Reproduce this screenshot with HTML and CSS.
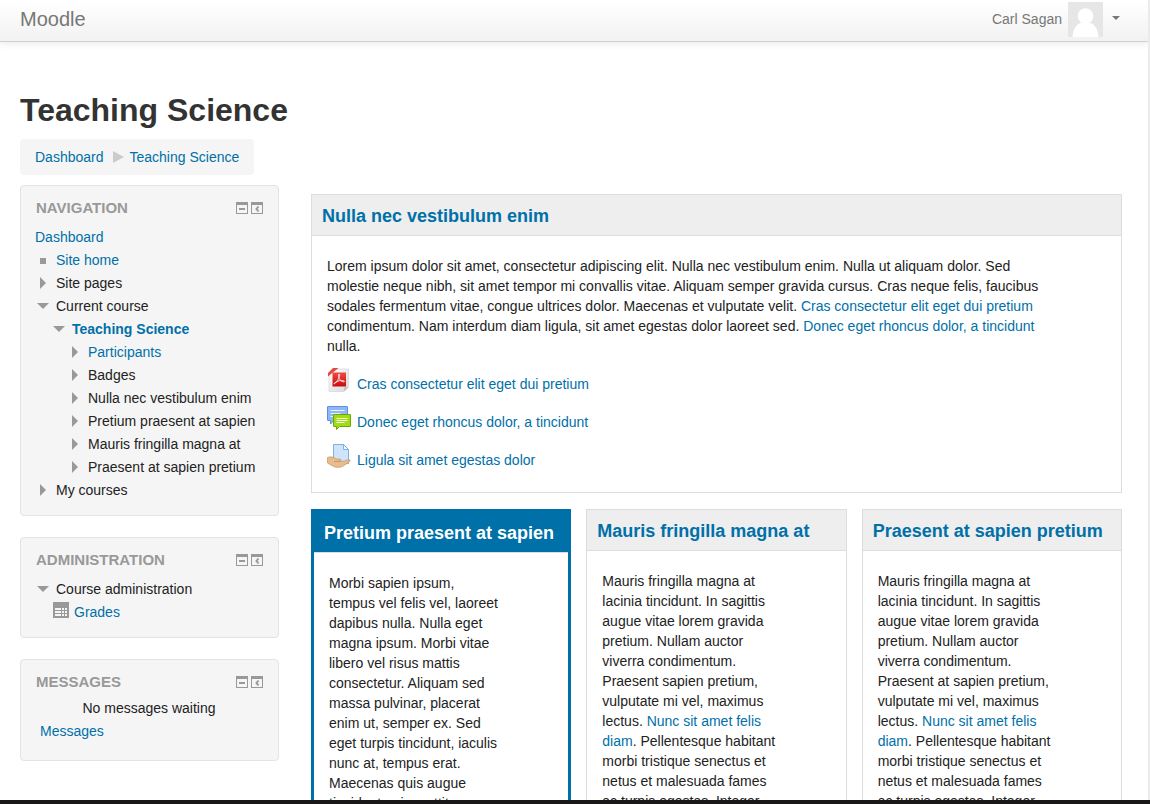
FILE: index.html
```
<!DOCTYPE html>
<html lang="en">
<head>
    <meta charset="UTF-8">
    <meta name="viewport" content="width=device-width, initial-scale=1.0">
    <title>Course: Teaching Science</title>
    <link rel="stylesheet" href="styles.css">
</head>
<body>
    <!-- shared icons -->
    <svg class="sprite" aria-hidden="true">
        <symbol id="hide" viewBox="0 0 12 12">
            <path fill="#999" fill-rule="evenodd" d="M0 0h12v12H0zM1 3v8h10V3z"/>
            <path fill="#999" d="M3 6h6v2H3z"/>
        </symbol>
        <symbol id="dock" viewBox="0 0 12 12">
            <path fill="#999" fill-rule="evenodd" d="M0 0h12v12H0zM1 3v8h10V3z"/>
            <path fill="none" stroke="#999" stroke-width="2" d="M7.500 4.500L5.500 7l2 2.500"/>
        </symbol>
        <symbol id="right" viewBox="0 0 16 16">
            <path fill="#999" d="M5 2l6 6-6 6z"/>
        </symbol>
        <symbol id="down" viewBox="0 0 16 16">
            <path fill="#999" d="M2 5h12L8 11z"/>
        </symbol>
        <symbol id="square" viewBox="0 0 16 16">
            <path fill="#999" d="M5 6h6v6H5z"/>
        </symbol>
    </svg>

    <div class="page">
        <header class="navbar">
            <a class="brand" href="#">Moodle</a>
            <button type="button" class="usermenu">
                <span>Carl Sagan</span>
                <svg class="avatar" viewBox="0 0 35 35">
                    <path fill="#e6e6e6" d="M0 0h35v35H0z"/>
                    <path fill="#fff" d="M4.500 35c.5-8 4-13 9-14.500h8c5 1.500 8.500 6.500 9 14.500z"/>
                    <circle cx="17.500" cy="14" r="7.800" fill="#fff"/>
                </svg>
                <span class="caret"></span>
            </button>
        </header>

        <div class="content">
            <h1>Teaching Science</h1>
            <nav class="breadcrumb" aria-label="Breadcrumb">
                <a href="#">Dashboard</a>
                <svg class="arrow" viewBox="0 0 11 12"><path fill="#ccc" d="M0 0l11 6-11 6z"/></svg>
                <a href="#">Teaching Science</a>
            </nav>

            <div class="columns">
                <aside class="sidebar">
                    <section class="block">
                        <div class="block-header">
                            <h2>Navigation</h2>
                            <button type="button" aria-label="Hide Navigation block"><svg><use href="#hide"/></svg></button>
                            <button type="button" aria-label="Dock Navigation block"><svg><use href="#dock"/></svg></button>
                        </div>
                        <ul class="tree">
                            <li><a href="#">Dashboard</a></li>
                            <li><svg><use href="#square"/></svg><a href="#">Site home</a></li>
                            <li><svg><use href="#right"/></svg>Site pages</li>
                            <li><svg><use href="#down"/></svg>Current course</li>
                            <li class="level2"><svg><use href="#down"/></svg><a href="#" class="current">Teaching Science</a></li>
                            <li class="level3"><svg><use href="#right"/></svg><a href="#">Participants</a></li>
                            <li class="level3"><svg><use href="#right"/></svg>Badges</li>
                            <li class="level3"><svg><use href="#right"/></svg>Nulla nec vestibulum enim</li>
                            <li class="level3"><svg><use href="#right"/></svg>Pretium praesent at sapien</li>
                            <li class="level3"><svg><use href="#right"/></svg>Mauris fringilla magna at</li>
                            <li class="level3"><svg><use href="#right"/></svg>Praesent at sapien pretium</li>
                            <li><svg><use href="#right"/></svg>My courses</li>
                        </ul>
                    </section>

                    <section class="block">
                        <div class="block-header">
                            <h2>Administration</h2>
                            <button type="button" aria-label="Hide Administration block"><svg><use href="#hide"/></svg></button>
                            <button type="button" aria-label="Dock Administration block"><svg><use href="#dock"/></svg></button>
                        </div>
                        <ul class="tree">
                            <li><svg><use href="#down"/></svg>Course administration</li>
                            <li class="grades">
                                <svg viewBox="0 0 16 16">
                                    <path fill="#999" d="M0 0h16v16H0z"/>
                                    <path fill="#f5f5f5" d="M2 6h6v2H2zM9 6h2v2H9zM12 6h2v2h-2zM2 9h6v2H2zM9 9h2v2H9zM12 9h2v2h-2zM2 12h6v2H2zM9 12h2v2H9zM12 12h2v2h-2z"/>
                                </svg>
                                <a href="#">Grades</a>
                            </li>
                        </ul>
                    </section>

                    <section class="block messages">
                        <div class="block-header">
                            <h2>Messages</h2>
                            <button type="button" aria-label="Hide Messages block"><svg><use href="#hide"/></svg></button>
                            <button type="button" aria-label="Dock Messages block"><svg><use href="#dock"/></svg></button>
                        </div>
                        <p class="empty">No messages waiting</p>
                        <a class="footer-link" href="#">Messages</a>
                    </section>
                </aside>

                <main class="topics">
                    <section class="topic wide">
                        <h3><a href="#">Nulla nec vestibulum enim</a></h3>
                        <div class="summary">
                            <p>Lorem ipsum dolor sit amet, consectetur adipiscing elit. Nulla nec vestibulum enim. Nulla ut aliquam dolor. Sed molestie neque nibh, sit amet tempor mi convallis vitae. Aliquam semper gravida cursus. Cras neque felis, faucibus sodales fermentum vitae, congue ultrices dolor. Maecenas et vulputate velit. <a href="#">Cras consectetur elit eget dui pretium</a> condimentum. Nam interdum diam ligula, sit amet egestas dolor laoreet sed. <a href="#">Donec eget rhoncus dolor, a tincidunt</a> nulla.</p>
                            <ul class="activities">
                                <li>
                                    <!-- pdf file -->
                                    <svg viewBox="0 0 24 24">
                                        <defs>
                                            <linearGradient id="paper" x1="0" y1="0" x2="1" y2="1">
                                                <stop offset="0" stop-color="#fff"/>
                                                <stop offset="1" stop-color="#d8d8dc"/>
                                            </linearGradient>
                                            <linearGradient id="red" x1="0" y1="0" x2="0" y2="1">
                                                <stop offset="0" stop-color="#f04a40"/>
                                                <stop offset="1" stop-color="#c80c0c"/>
                                            </linearGradient>
                                        </defs>
                                        <path fill="url(#paper)" stroke="#d0d0d4" stroke-width=".6" d="M8 1h13.500v18L17 23.500H2V7z"/>
                                        <path fill="#bbb" d="M21.500 19L17 23.500l.5-4z"/>
                                        <path fill="#e04a40" d="M6 0h5.500L1 8.500V5z"/>
                                        <path fill="url(#red)" d="M5.500 4.500h13.500v14H5.500z"/>
                                        <path fill="none" stroke="#fff" stroke-width=".8" stroke-linejoin="round" d="M12 6c1.500 0 .5 5-4 9.500-1 .8-1.300.2-.5-.6 3-2.300 7-2.800 9.500-2 1 .5.200 1.200-1 .9-3-.8-5.600-5.300-4-7.800z"/>
                                    </svg>
                                    <a href="#">Cras consectetur elit eget dui pretium</a>
                                </li>
                                <li>
                                    <!-- forum -->
                                    <svg viewBox="0 0 24 24">
                                        <path fill="#8fb8f4" stroke="#5c8fdc" d="M1 .5h19q.5 0 .5.500v13q0 .5-.5.500H7L3.500 18v-3.500H1q-.5 0-.5-.5V1q0-.5.500-.5z"/>
                                        <path fill="none" stroke="#e8f1ff" d="M3.500 4.500h14M3.500 7.500h10M3.500 10.500h3"/>
                                        <path fill="#a2dc16" stroke="#6da50a" d="M7 8.500h16q.5 0 .5.500v11q0 .5-.5.500H12.500L9.500 23.500v-3H7q-.5 0-.5-.5V9q0-.5.500-.5z"/>
                                        <path fill="none" stroke="#f4ffd8" d="M9.500 12.500h11M9.500 14.500h11M9.500 16.500h8"/>
                                    </svg>
                                    <a href="#">Donec eget rhoncus dolor, a tincidunt</a>
                                </li>
                                <li>
                                    <!-- assignment -->
                                    <svg viewBox="0 0 24 24">
                                        <path fill="#cfe4fb" stroke="#7fb0e4" d="M6.500.5h10l5 5v14h-15z"/>
                                        <path fill="#f0f7ff" stroke="#7fb0e4" d="M16.500.5v5h5z"/>
                                        <path fill="#e8bc8c" stroke="#c08a54" stroke-width=".6" d="M.5 13.500c3-1.200 6-.7 8.500 1.500h4c1.500.5 1.500 2-.5 2.300 3.500.4 6-.6 9-1.600 2-.2 2.300 1 1 2L17 21.500c-2 1.500-5 2.200-8 1.800C6 22.500 3 20.500.5 19z"/>
                                        <path fill="none" stroke="#b8834f" stroke-width=".6" d="M7 17.500h6"/>
                                    </svg>
                                    <a href="#">Ligula sit amet egestas dolor</a>
                                </li>
                            </ul>
                        </div>
                    </section>

                    <section class="topic active">
                        <h3><a href="#">Pretium praesent at sapien</a></h3>
                        <div class="summary">
                            <p>Morbi sapien ipsum, tempus vel felis vel, laoreet dapibus nulla. Nulla eget magna ipsum. Morbi vitae libero vel risus mattis consectetur. Aliquam sed massa pulvinar, placerat enim ut, semper ex. Sed eget turpis tincidunt, iaculis nunc at, tempus erat. Maecenas quis augue tincidunt quis mattitor</p>
                        </div>
                    </section>

                    <section class="topic">
                        <h3><a href="#">Mauris fringilla magna at</a></h3>
                        <div class="summary">
                            <p>Mauris fringilla magna at lacinia tincidunt. In sagittis augue vitae lorem gravida pretium. Nullam auctor viverra condimentum. Praesent sapien pretium, vulputate mi vel, maximus lectus. <a href="#">Nunc sit amet felis diam</a>. Pellentesque habitant morbi tristique senectus et netus et malesuada fames ac turpis egestas. Integer</p>
                        </div>
                    </section>

                    <section class="topic">
                        <h3><a href="#">Praesent at sapien pretium</a></h3>
                        <div class="summary">
                            <p>Mauris fringilla magna at lacinia tincidunt. In sagittis augue vitae lorem gravida pretium. Nullam auctor viverra condimentum. Praesent at sapien pretium, vulputate mi vel, maximus lectus. <a href="#">Nunc sit amet felis diam</a>. Pellentesque habitant morbi tristique senectus et netus et malesuada fames ac turpis egestas. Integer</p>
                        </div>
                    </section>
                </main>
            </div>
        </div>
    </div>
</body>
</html>
```
FILE: styles.css
```
* {
    box-sizing: border-box;
}
body {
    font-family: "Helvetica Neue", "Liberation Sans", Arial, sans-serif;
    font-size: 14px;
    line-height: 20px;
    color: #222;
    background-color: #fff;
    margin: 0;
    height: 100vh;
    border-bottom: 4px solid #1a1718;
    overflow: hidden;
}
h1, h2, h3, p, ul {
    margin: 0;
    padding: 0;
}
ul {
    list-style: none;
}
a {
    color: #0070a8;
    text-decoration: none;
}
button {
    font: inherit;
    color: inherit;
    background: none;
    border: none;
    padding: 0;
    cursor: pointer;
}
svg {
    display: block;
    flex: none;
}
.sprite {
    display: none;
}
.page {
    height: 100%;
    border-right: 2px solid #ebebeb;
    overflow: hidden;
}

/* top bar */
.navbar {
    display: flex;
    align-items: center;
    justify-content: space-between;
    height: 42px;
    padding: 0 28px 3px 20px;
    background: linear-gradient(#fff, #f2f2f2);
    border-bottom: 1px solid #d0d0d0;
    box-shadow: 0 1px 8px rgba(0,0,0,0.1);
}
.brand {
    font-size: 20px;
    color: #777;
}
.usermenu {
    display: flex;
    align-items: center;
    gap: 6px;
    color: #777;
}
.avatar {
    width: 35px;
    height: 35px;
}
.caret {
    margin: 0 0 2px 3px;
    border-top: 4px solid #777;
    border-left: 4px solid transparent;
    border-right: 4px solid transparent;
}

/* page heading */
.content {
    padding: 48px 26px 0 20px;
}
h1 {
    font-size: 32px;
    line-height: 40px;
    color: #333;
}
.breadcrumb {
    display: flex;
    align-items: center;
    gap: 6px;
    width: fit-content;
    margin: 9px 0 10px;
    padding: 8px 15px;
    background-color: #f5f5f5;
    border-radius: 4px;
}
.arrow {
    width: 11px;
    height: 12px;
    margin-left: 3px;
}
.columns {
    display: flex;
    align-items: flex-start;
    gap: 32px;
}

/* side blocks */
.sidebar {
    flex: none;
    width: 259px;
}
.block {
    margin-bottom: 21px;
    padding: 12px 15px 14px 14px;
    background-color: #f5f5f5;
    border: 1px solid #e3e3e3;
    border-radius: 4px;
}
.block-header {
    display: flex;
    align-items: center;
    gap: 3px;
    margin-bottom: 7px;
    padding-left: 1px;
}
.block-header h2 {
    flex: 1;
    font-size: 15px;
    line-height: 20px;
    color: #999;
    text-transform: uppercase;
}
.block-header svg {
    width: 12px;
    height: 12px;
}
.tree li {
    display: flex;
    align-items: center;
    height: 23px;
}
.tree svg {
    width: 16px;
    height: 16px;
    margin-right: 5px;
}
.tree .level2 {
    padding-left: 16px;
}
.tree .level3 {
    padding-left: 32px;
}
.tree .grades {
    padding-left: 18px;
}
.grades svg {
    margin-bottom: 4px;
}
.tree .current {
    font-weight: bold;
}
.messages {
    padding-bottom: 17px;
}
.messages .block-header {
    margin-bottom: 5px;
}
.empty {
    line-height: 23px;
    text-align: center;
}
.footer-link {
    display: block;
    padding-left: 5px;
    line-height: 23px;
}

/* course topics */
.topics {
    flex: 1;
    display: grid;
    grid-template-columns: repeat(3, minmax(0, 1fr));
    gap: 16px 15px;
    margin-top: 9px;
}
.topic {
    border: 1px solid #ddd;
}
.topic.wide {
    grid-column: 1 / -1;
}
.topic h3 {
    padding: 11px 10px 9px;
    font-size: 18px;
    line-height: 20px;
    background-color: #eee;
    border-bottom: 1px solid #ddd;
}
.summary {
    padding: 20px 70px 13px 15px;
}
.topic.active {
    border: 3px solid #0070a8;
}
.active h3 {
    background-color: #0070a8;
}
.active h3 a {
    color: #fff;
}
.activities {
    margin-top: 9px;
}
.activities li {
    display: flex;
    gap: 6px;
    height: 38px;
    padding-top: 3px;
}
.activities svg {
    width: 24px;
    height: 24px;
}
.activities a {
    padding-top: 6px;
}
```
